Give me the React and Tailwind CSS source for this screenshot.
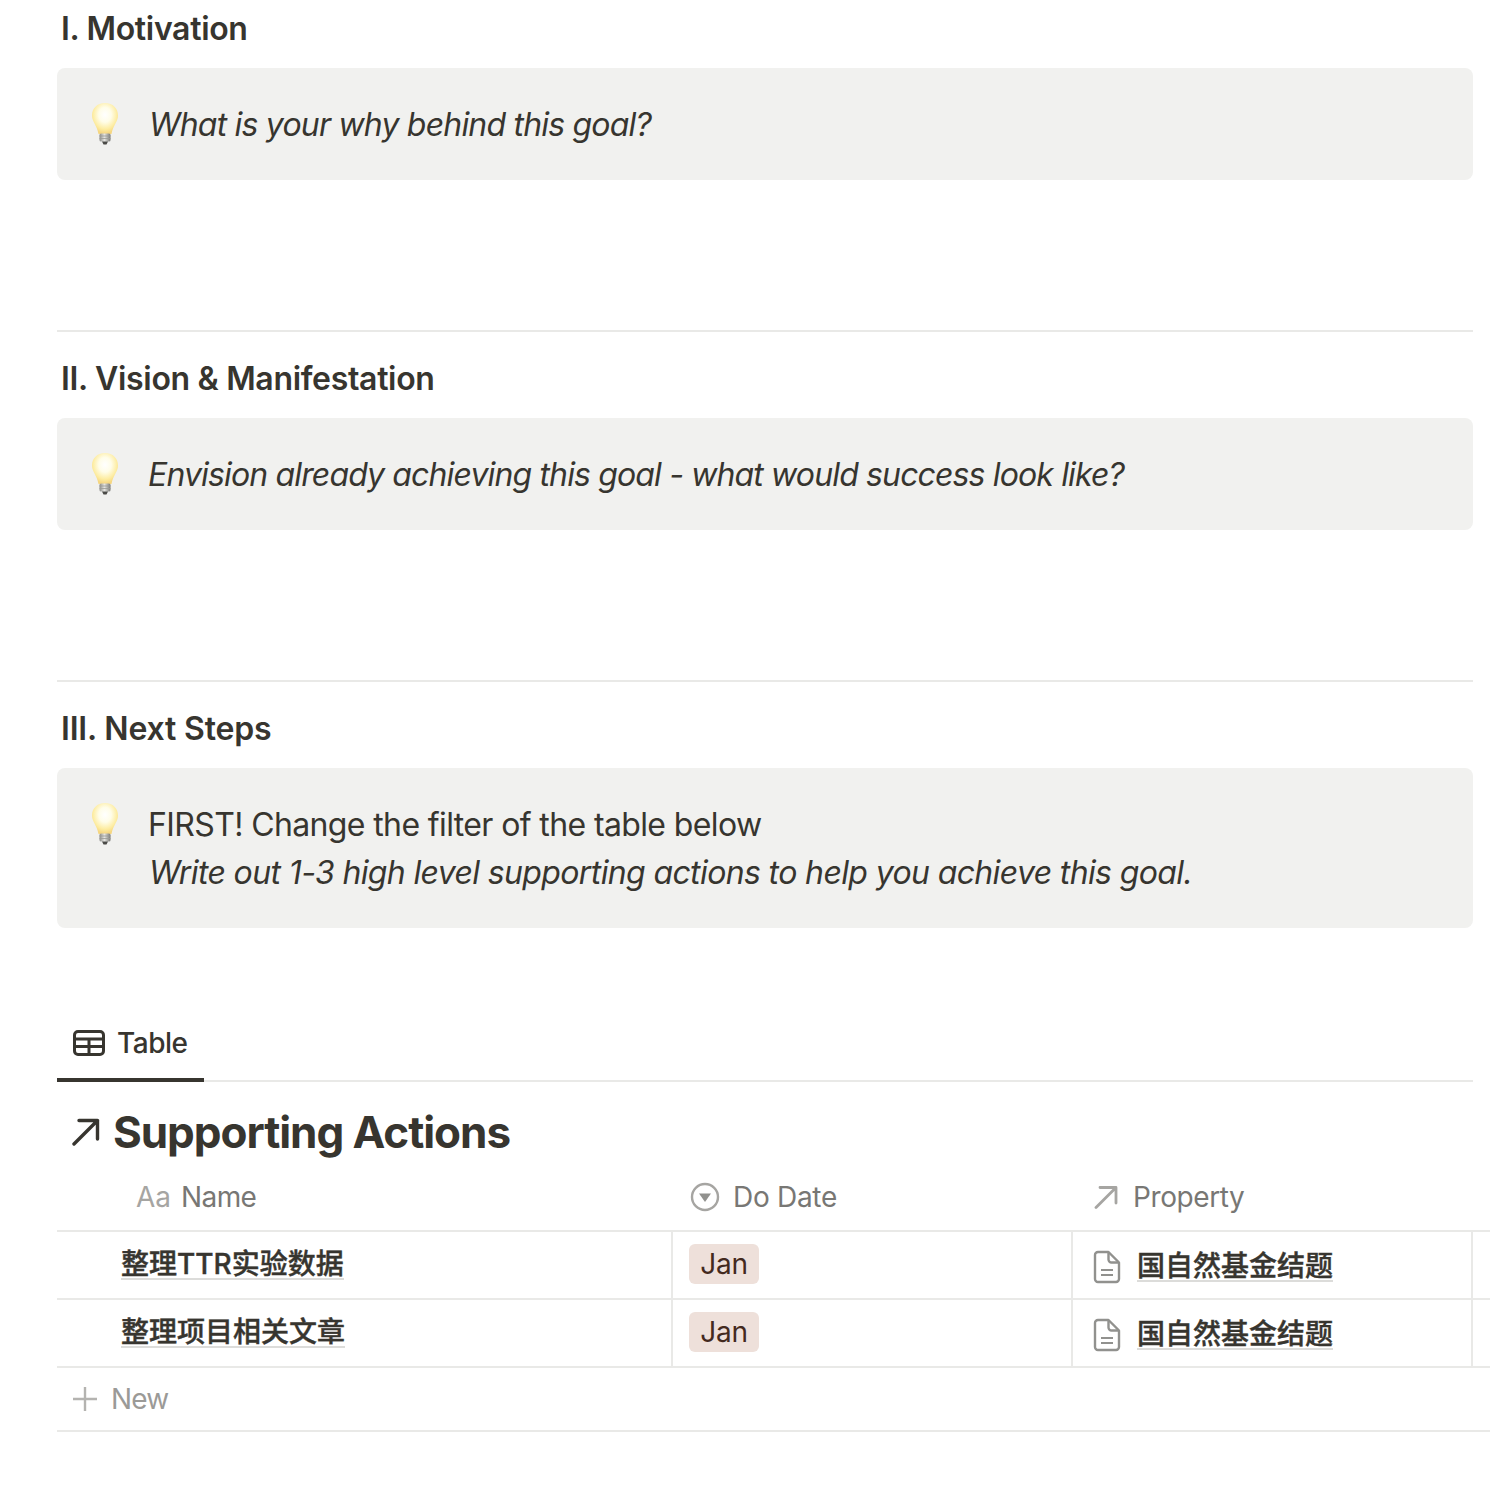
import React from "react";

const FONT = "font-['Inter','Noto_Sans_CJK_SC',sans-serif]";

function Bulb() {
  return (
    <svg width="30" height="44" viewBox="0 0 30 44" className="shrink-0">
      <defs>
        <radialGradient id="glow" cx="50%" cy="38%" r="60%">
          <stop offset="0%" stopColor="#ffffff" />
          <stop offset="40%" stopColor="#fffde8" />
          <stop offset="78%" stopColor="#fdeca0" />
          <stop offset="100%" stopColor="#f6d680" />
        </radialGradient>
        <linearGradient id="base" x1="0" x2="1" y1="0" y2="0">
          <stop offset="0%" stopColor="#8c8c88" />
          <stop offset="45%" stopColor="#e4e4e0" />
          <stop offset="100%" stopColor="#777773" />
        </linearGradient>
      </defs>
      <path d="M15 1C7 1 2 6.500 2 13.500c0 6.500 5 9.500 6.500 18.500h13C23 23 28 20 28 13.500 28 6.500 23 1 15 1z" fill="url(#glow)" />
      <rect x="9.500" y="31.500" width="11" height="8" rx="1.500" fill="url(#base)" />
      <path d="M9.500 34h11M9.500 36.500h11" stroke="#9a9a96" strokeWidth="0.800" />
      <path d="M12 39.500h6l-1.500 3h-3z" fill="#4a4a47" />
    </svg>
  );
}

function Callout({ children, tall }) {
  return (
    <div className={`flex rounded-lg bg-[#f1f1ef] pl-[33px] pt-[34px] ${tall ? "h-40" : "h-28"}`}>
      <Bulb />
      <div className="-mt-px ml-[29px] text-[32px] leading-[48px] text-[#37352f]">{children}</div>
    </div>
  );
}

function Heading({ children }) {
  return (
    <h3 className="flex h-[58px] items-center pl-1 text-[32px] font-semibold tracking-[-0.32px] text-[#37352f]">{children}</h3>
  );
}

function DocIcon() {
  return (
    <svg width="28" height="34" viewBox="0 0 28 34" fill="none" stroke="#91918e" strokeWidth="2.400" className="shrink-0">
      <path d="M5 2h10.500L26 12.500V29a3 3 0 0 1-3 3H5a3 3 0 0 1-3-3V5a3 3 0 0 1 3-3z" strokeLinejoin="round" />
      <path d="M15.500 2v7.500a3 3 0 0 0 3 3H26" />
      <path d="M8 20h12M8 25h12" strokeWidth="2" />
    </svg>
  );
}

function Linked({ children }) {
  return (
    <span className="inline-block border-b-2 border-[#dcdcda] font-medium leading-7 text-[#37352f] [-webkit-text-stroke:0.4px_#37352f]">{children}</span>
  );
}

function Row({ name }) {
  return (
    <div className="flex h-[68px] border-b-2 border-[#e9e9e7] text-[28px]">
      <div className="flex w-[616px] items-start border-r-2 border-[#e9e9e7] pl-16 pt-[18px]">
        <Linked>{name}</Linked>
      </div>
      <div className="flex w-[400px] items-start border-r-2 border-[#e9e9e7] pl-4 pt-3">
        <span className="flex h-10 w-[70px] items-center justify-center rounded-md bg-[#eee0da] tracking-[-0.2px] text-[#442a1e]">Jan</span>
      </div>
      <div className="flex w-[400px] items-start border-r-2 border-[#e9e9e7] pl-5 pt-[18px]">
        <DocIcon />
        <div className="-mt-[5px] ml-4">
          <Linked>国自然基金结题</Linked>
        </div>
      </div>
    </div>
  );
}

export default function App() {
  return (
    <div className={`h-[1498px] overflow-hidden bg-white pl-[57px] antialiased ${FONT}`}>
      <div className="w-[1416px]">
        <Heading>I. Motivation</Heading>
        <div className="mt-[10px]">
          <Callout>
            <em className="tracking-[-0.8px]">What is your why behind this goal?</em>
          </Callout>
        </div>
        <div className="mt-[150px] h-0.5 bg-[#e9e9e7]" />

        <div className="mt-[18px]">
          <Heading>II. Vision &amp; Manifestation</Heading>
        </div>
        <div className="mt-[10px]">
          <Callout>
            <em className="-ml-px tracking-[-0.86px]">Envision already achieving this goal - what would success look like?</em>
          </Callout>
        </div>
        <div className="mt-[150px] h-0.5 bg-[#e9e9e7]" />

        <div className="mt-[18px]">
          <Heading>
            <span className="tracking-[-0.18px]">III. Next Steps</span>
          </Heading>
        </div>
        <div className="mt-[10px]">
          <Callout tall>
            <div className="-ml-px tracking-[-0.62px]">FIRST! Change the filter of the table below</div>
            <em className="tracking-[-0.63px]">Write out 1-3 high level supporting actions to help you achieve this goal.</em>
          </Callout>
        </div>

        <div className="mt-[72px] flex h-[82px] border-b-2 border-[#e9e9e7]">
          <div className="-mb-0.5 flex h-[82px] w-[147px] items-center border-b-4 border-[#37352f] pl-4 pt-2">
            <svg width="32" height="26" viewBox="0 0 32 26" fill="none" stroke="#37352f" strokeWidth="3">
              <rect x="1.500" y="1.500" width="29" height="23" rx="3.500" />
              <path d="M1.500 9h29M1.500 16.500h29M16 9v15.500" />
            </svg>
            <span className="ml-[12px] text-[28px] font-medium tracking-[-0.5px] text-[#37352f]">Table</span>
          </div>
        </div>

        <div className="flex h-[84px] items-center pl-[15px] pt-4">
          <svg width="28" height="28" viewBox="0 0 28 28" fill="none" stroke="#37352f" strokeWidth="3.400" strokeLinecap="round" strokeLinejoin="round">
            <path d="M2 26L25.500 2.500M7 2.500h18.500V21" />
          </svg>
          <h2 className="ml-[13px] text-[44px] font-bold tracking-[-1.05px] text-[#37352f]">Supporting Actions</h2>
        </div>
      </div>

      <div className="w-[1433px]">
        <div className="flex h-[66px] items-center border-b-2 border-[#e9e9e7] pb-[2px] text-[28px] text-[#787774]">
          <div className="flex w-[616px] items-center pl-[79px]">
            <span className="text-[#a6a5a2]">Aa</span>
            <span className="ml-[10px] tracking-[-0.6px]">Name</span>
          </div>
          <div className="flex w-[400px] items-center pl-[17px]">
            <svg width="30" height="30" viewBox="0 0 30 30" fill="none">
              <circle cx="15" cy="15" r="13" stroke="#a6a5a2" strokeWidth="2.400" />
              <path d="M9 11.500h12L15 20z" fill="#91918e" />
            </svg>
            <span className="ml-[13px] tracking-[-0.3px]">Do Date</span>
          </div>
          <div className="flex w-[400px] items-center pl-[21px]">
            <svg width="24" height="24" viewBox="0 0 24 24" fill="none" stroke="#a6a5a2" strokeWidth="2.800" strokeLinecap="round" strokeLinejoin="round">
              <path d="M2 22.500L21.500 3M6 2.500h16V18" />
            </svg>
            <span className="ml-[15px] tracking-[-0.4px]">Property</span>
          </div>
        </div>
        <Row name="整理TTR实验数据" />
        <Row name="整理项目相关文章" />
        <div className="flex h-16 items-center border-b-2 border-[#e9e9e7] pl-4 text-[28px] text-[#9b9a97]">
          <svg width="24" height="24" viewBox="0 0 24 24" fill="none" stroke="#b4b3b0" strokeWidth="2.400">
            <path d="M12 0v24M0 12h24" />
          </svg>
          <span className="ml-3.5 tracking-[-0.8px]">New</span>
        </div>
      </div>
    </div>
  );
}
